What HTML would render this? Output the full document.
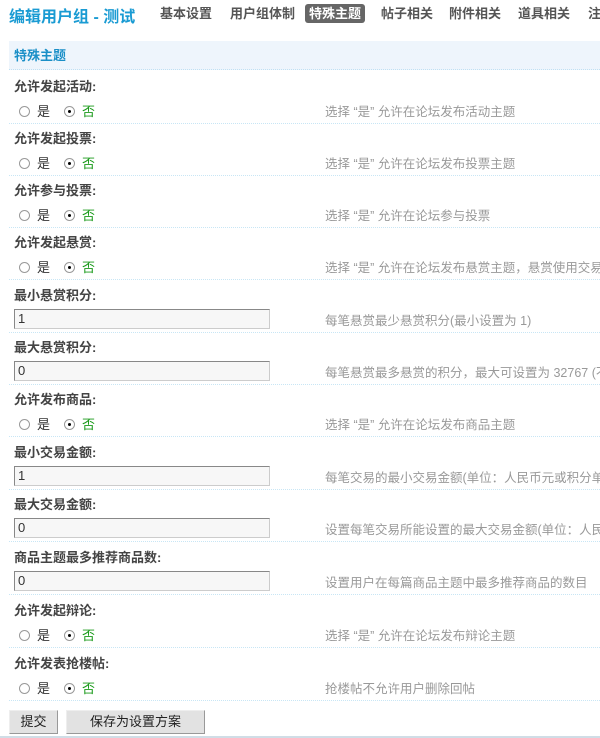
<!DOCTYPE html>
<html><head><meta charset="utf-8"><style>
*{margin:0;padding:0;box-sizing:border-box}
html,body{width:600px;height:738px;overflow:hidden}
body{background:#fff;font-family:"Liberation Sans","Noto Sans CJK SC","WenQuanYi Zen Hei",sans-serif;font-size:12px;color:#333;position:relative}
.t{position:absolute;left:9px;top:3px;font-size:16px;color:#1a9bd3;white-space:nowrap;font-weight:bold}
.nav{position:absolute;left:0;top:0;width:600px;height:30px;overflow:hidden}
.nav span{position:absolute;top:4px;white-space:nowrap;font-size:13px;font-weight:bold;color:#555;padding:1px 0;line-height:17px}
.nav .on{background:#666;color:#fff;border-radius:3px;padding:1px 4px}
.hd{position:absolute;left:9px;width:591px;top:41px;height:29px;background:#eef5fc;border-bottom:1px dotted #bfe0f3;color:#1a8fc7;font-weight:bold;line-height:29px;padding-left:5px;font-size:13px}
.r{position:absolute;left:9px;width:591px;height:52px;border-bottom:1px dotted #c8e6f5;overflow:hidden}
.l{position:absolute;left:5px;top:4px;font-weight:bold;color:#444;font-size:13px}
.c{position:absolute;left:10px;top:29px;white-space:nowrap;font-size:13px}
.d{position:absolute;left:316px;top:29px;color:#999;white-space:nowrap;font-size:12.5px}
.rad{display:inline-block;width:11px;height:11px;border:1px solid #999;border-radius:50%;vertical-align:-1px;margin-right:7px;background:#fff;position:relative}
.rad.s{margin-left:14px}
.rad.s:after{content:"";position:absolute;left:3px;top:3px;width:3px;height:3px;background:#000;border-radius:50%}
.g{color:#1a9a1a}
.in{position:absolute;left:5px;top:28px;width:256px;height:20px;border:1px solid #888;border-right-color:#ccc;border-bottom-color:#ccc;background:#f7f7f7;padding-left:3px;line-height:18px;color:#333;font-size:13px}
.btn{position:absolute;top:710px;height:24px;background:#e2e2e2;border:1px solid #999;border-top-color:#eee;border-left-color:#eee;text-align:center;line-height:22px;color:#222;font-size:13px}
.bot{position:absolute;left:0;width:600px;top:736px;height:2px;background:#d0dde6}
</style></head><body>
<div class="t">编辑用户组 - 测试</div>
<div class="nav"><span style="left:160px">基本设置</span><span style="left:230px">用户组体制</span><span class="on" style="left:305px">特殊主题</span><span style="left:381px">帖子相关</span><span style="left:449px">附件相关</span><span style="left:518px">道具相关</span><span style="left:588px">注</span></div>
<div class="hd">特殊主题</div>

<div class="r" style="top:72px"><div class="l">允许发起活动:</div><div class="c"><span class="rad"></span>是<span class="rad s"></span><span class="g">否</span></div><div class="d">选择 “是” 允许在论坛发布活动主题</div></div>
<div class="r" style="top:124px"><div class="l">允许发起投票:</div><div class="c"><span class="rad"></span>是<span class="rad s"></span><span class="g">否</span></div><div class="d">选择 “是” 允许在论坛发布投票主题</div></div>
<div class="r" style="top:176px"><div class="l">允许参与投票:</div><div class="c"><span class="rad"></span>是<span class="rad s"></span><span class="g">否</span></div><div class="d">选择 “是” 允许在论坛参与投票</div></div>
<div class="r" style="top:228px"><div class="l">允许发起悬赏:</div><div class="c"><span class="rad"></span>是<span class="rad s"></span><span class="g">否</span></div><div class="d">选择 “是” 允许在论坛发布悬赏主题，悬赏使用交易积分</div></div>
<div class="r" style="top:281px"><div class="l">最小悬赏积分:</div><div class="in">1</div><div class="d">每笔悬赏最少悬赏积分(最小设置为 1)</div></div>
<div class="r" style="top:333px"><div class="l">最大悬赏积分:</div><div class="in">0</div><div class="d">每笔悬赏最多悬赏的积分，最大可设置为 32767 (不限制)</div></div>
<div class="r" style="top:385px"><div class="l">允许发布商品:</div><div class="c"><span class="rad"></span>是<span class="rad s"></span><span class="g">否</span></div><div class="d">选择 “是” 允许在论坛发布商品主题</div></div>
<div class="r" style="top:438px"><div class="l">最小交易金额:</div><div class="in">1</div><div class="d">每笔交易的最小交易金额(单位：人民币元或积分单位)</div></div>
<div class="r" style="top:490px"><div class="l">最大交易金额:</div><div class="in">0</div><div class="d">设置每笔交易所能设置的最大交易金额(单位：人民币元)</div></div>
<div class="r" style="top:543px"><div class="l">商品主题最多推荐商品数:</div><div class="in">0</div><div class="d">设置用户在每篇商品主题中最多推荐商品的数目</div></div>
<div class="r" style="top:596px"><div class="l">允许发起辩论:</div><div class="c"><span class="rad"></span>是<span class="rad s"></span><span class="g">否</span></div><div class="d">选择 “是” 允许在论坛发布辩论主题</div></div>
<div class="r" style="top:649px"><div class="l">允许发表抢楼帖:</div><div class="c"><span class="rad"></span>是<span class="rad s"></span><span class="g">否</span></div><div class="d">抢楼帖不允许用户删除回帖</div></div>

<div class="btn" style="left:9px;width:49px">提交</div>
<div class="btn" style="left:66px;width:139px">保存为设置方案</div>
<div class="bot"></div>
</body></html>
